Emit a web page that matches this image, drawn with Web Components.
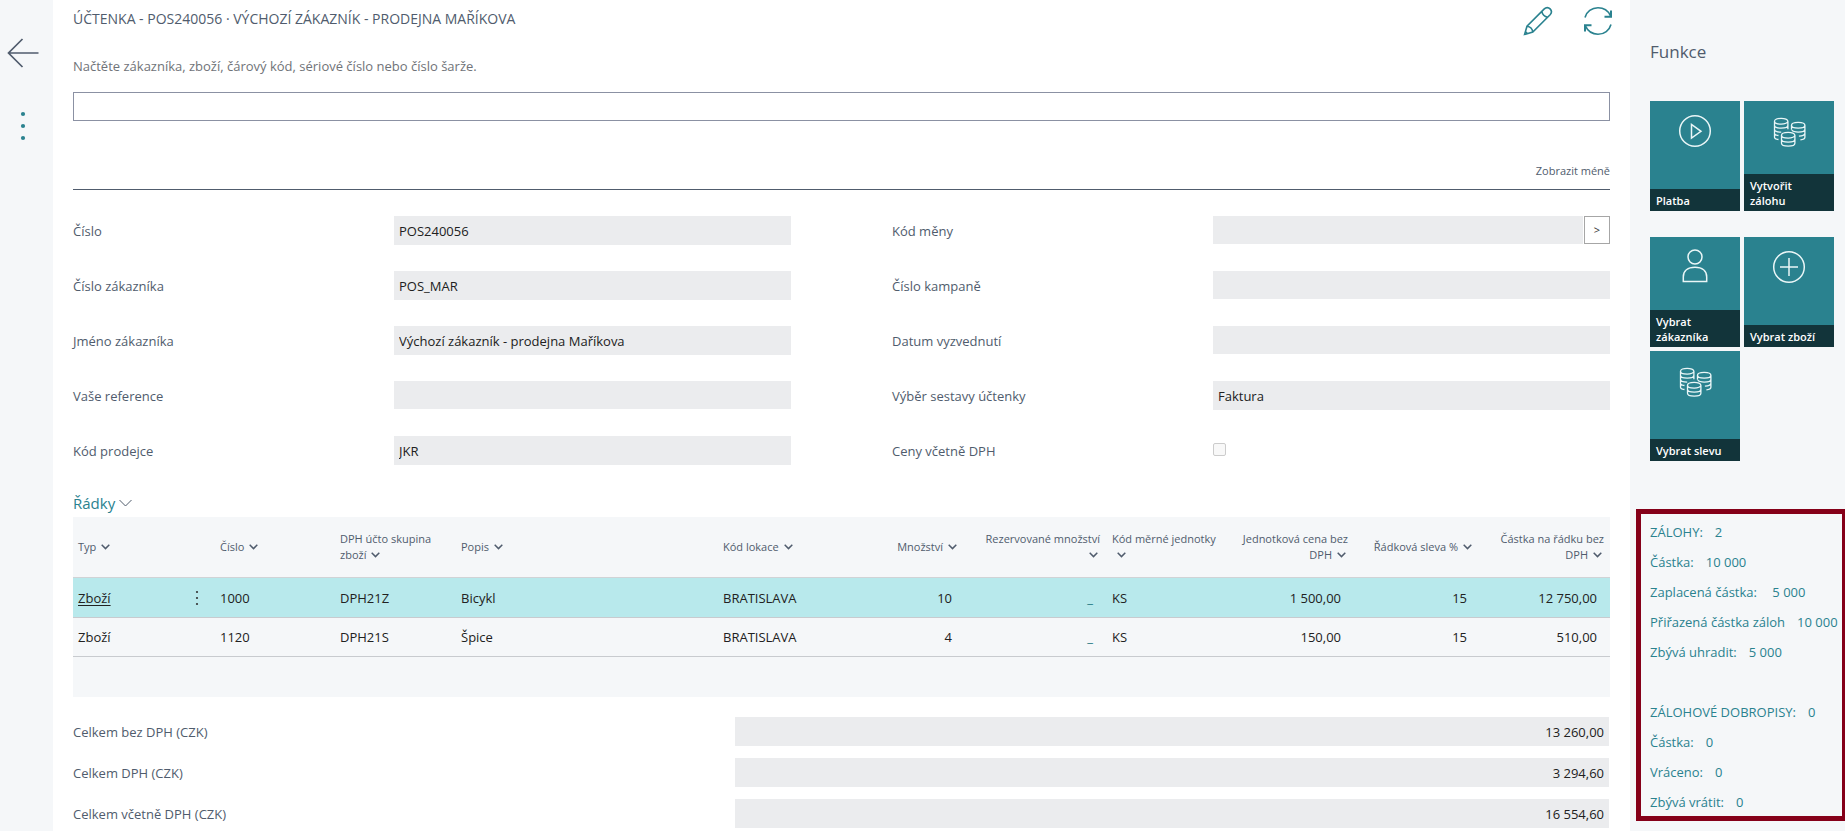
<!DOCTYPE html>
<html lang="cs">
<head>
<meta charset="utf-8">
<title>Účtenka - POS240056</title>
<style>
  body {
    margin: 0;
    background: #fff;
    font: 13px/20px "Open Sans", "Noto Sans", sans-serif;
    color: #212121;
    --slate: #505c6d;
    --teal: #2a828f;
    --panel: #f5f7f9;
    --field: #ebecee;
  }
</style>
</head>
<body>
<pos-app>
  <pos-rail slot="rail"></pos-rail>

  <pos-title slot="main">ÚČTENKA - POS240056 · VÝCHOZÍ ZÁKAZNÍK - PRODEJNA MAŘÍKOVA</pos-title>
  <pos-scan slot="main" label="Načtěte zákazníka, zboží, čárový kód, sériové číslo nebo číslo šarže."></pos-scan>
  <pos-form slot="main">
    <pos-field label="Číslo" value="POS240056"></pos-field>
    <pos-field label="Kód měny" lookup></pos-field>
    <pos-field label="Číslo zákazníka" value="POS_MAR"></pos-field>
    <pos-field label="Číslo kampaně"></pos-field>
    <pos-field label="Jméno zákazníka" value="Výchozí zákazník - prodejna Maříkova"></pos-field>
    <pos-field label="Datum vyzvednutí"></pos-field>
    <pos-field label="Vaše reference"></pos-field>
    <pos-field label="Výběr sestavy účtenky" value="Faktura"></pos-field>
    <pos-field label="Kód prodejce" value="JKR"></pos-field>
    <pos-field label="Ceny včetně DPH" type="checkbox"></pos-field>
  </pos-form>
  <pos-lines slot="main"></pos-lines>
  <pos-totals slot="main">
    <pos-total label="Celkem bez DPH (CZK)" value="13 260,00"></pos-total>
    <pos-total label="Celkem DPH (CZK)" value="3 294,60"></pos-total>
    <pos-total label="Celkem včetně DPH (CZK)" value="16 554,60"></pos-total>
  </pos-totals>

  <pos-functions slot="side">
    <pos-tile slot="pay" icon="play">Platba</pos-tile>
    <pos-tile slot="pay" icon="coins">Vytvořit zálohu</pos-tile>
    <pos-tile slot="pick" icon="user">Vybrat zákazníka</pos-tile>
    <pos-tile slot="pick" icon="plus">Vybrat zboží</pos-tile>
    <pos-tile slot="pick" icon="coins">Vybrat slevu</pos-tile>
  </pos-functions>
  <pos-balance slot="side"></pos-balance>
</pos-app>

<script>
const define = (name, html) => {
  const template = document.createElement('template');
  customElements.define(name, class extends HTMLElement {
    connectedCallback() {
      if (this.shadowRoot) return;
      template.innerHTML = '<style>:host,*{box-sizing:border-box}</style>' + (typeof html === 'function' ? html(this) : html);
      this.attachShadow({ mode: 'open' }).append(template.content.cloneNode(true));
    }
  });
};

define('pos-app', `
  <style>
    :host { display: grid; grid-template-columns: 53px minmax(0, 1fr) 215px; min-height: 100vh; }
    main { padding: 0 20px 2px; }
    aside { background: var(--panel); overflow: hidden; }
  </style>
  <slot name="rail"></slot>
  <main><slot name="main"></slot></main>
  <aside><slot name="side"></slot></aside>
`);

define('pos-rail', `
  <style>
    :host { display: flex; flex-direction: column; align-items: center; gap: 40px; padding: 38px 7px 0 0; background: var(--panel); }
    button { display: block; padding: 0; border: 0; background: none; cursor: pointer; }
    svg { display: block; }
  </style>
  <button aria-label="Zpět"><svg width="32" height="30" viewBox="0 0 32 30" fill="none" stroke="#505c6d" stroke-width="1.7"><path d="M31.5 15H1.5M15.5 1 1.5 15l14 14"/></svg></button>
  <button aria-label="Další akce"><svg width="32" height="36" viewBox="0 0 32 36" fill="#2a828f"><circle cx="16" cy="6" r="2.1"/><circle cx="16" cy="18" r="2.1"/><circle cx="16" cy="30" r="2.1"/></svg></button>
`);

define('pos-title', `
  <style>
    :host { display: flex; justify-content: space-between; align-items: flex-start; height: 56px; padding-top: 6px; margin-right: -3px; }
    h1 { margin: 3px 0 0; font-size: 14px; line-height: 20px; font-weight: 400; color: var(--slate); }
    div { display: flex; gap: 30px; }
    button { display: block; padding: 0; border: 0; background: none; cursor: pointer; }
    svg { display: block; fill: none; stroke: var(--teal); stroke-width: 1.6; }
  </style>
  <h1><slot></slot></h1>
  <div>
    <button aria-label="Upravit"><svg width="30" height="30" viewBox="0 0 30 30"><path d="M1.6 28.4 4 20.200 21.300 2.900c1.700-1.700 4.200-1.700 5.800 0s1.600 4.100 0 5.800L9.800 26zM18.800 5.400c.6 3 2.800 5.200 5.800 5.800M4 20.200c3 .4 5.400 2.800 5.800 5.800M2.400 25.600l2 2"/></svg></button>
    <button aria-label="Obnovit"><svg width="30" height="30" viewBox="0 0 30 30"><path d="M2 11.500C3.500 5.700 8.800 1.800 15 1.800c5.600 0 10.200 3 12.500 8M28 18.500C26.500 24.300 21.200 28.200 15 28.200c-5.600 0-10.200-3-12.500-8"/><path stroke-width="2" d="M28 4.500v6.200h-6.500M2 25.500v-6.200h6.500"/></svg></button>
  </div>
`);

define('pos-scan', el => `
  <style>
    :host { display: block; border-bottom: 1px solid var(--slate); height: 134px; }
    label { display: block; color: #707378; margin-bottom: 16px; }
    input { display: block; width: 100%; height: 29px; border: 1px solid #8b91a3; background: #fff; padding: 0 5px; font: inherit; outline: 0; }
    a { display: block; width: fit-content; margin: 40px 0 0 auto; font-size: 11px; line-height: 20px; color: var(--slate); text-decoration: none; }
  </style>
  <label for="scan">${el.getAttribute('label')}</label>
  <input id="scan" type="text">
  <a href="#">Zobrazit méně</a>
`);

define('pos-form', `
  <style>
    :host { display: grid; grid-template-columns: 1fr 1fr; column-gap: 101px; row-gap: 26px; padding-top: 26px; }
  </style>
  <slot></slot>
`);

define('pos-field', el => {
  const value = el.getAttribute('value') || '';
  const check = el.getAttribute('type') === 'checkbox';
  return `
  <style>
    :host { display: grid; grid-template-columns: 321fr 397fr; align-items: center; height: 29px; }
    label { color: var(--slate); }
    div { display: flex; gap: 1px; align-items: flex-start; height: 29px; }
    [type=text] { flex: 1; min-width: 0; height: ${value ? 29 : 28}px; border: 0; border-radius: 0; padding: 0 5px; background: var(--field); font: inherit; color: inherit; outline: 0; }
    [type=checkbox] { appearance: none; width: 13px; height: 13px; margin: 7px 0 0; border: 1px solid #ccc; border-radius: 2px; background: #f8f8f8; }
    button { width: 26px; height: 28px; padding: 0; border: 1px solid #a6a6a6; background: #fff; font: inherit; font-size: 11px; color: #333; }
  </style>
  <label for="f">${el.getAttribute('label')}</label>
  <div>${check ? '<input id="f" type="checkbox" disabled>' : `<input id="f" type="text" readonly value="${value}">`}${el.hasAttribute('lookup') ? '<button aria-label="Vyhledat">&gt;</button>' : ''}</div>`;
});

const chevron = '<svg class="chev" width="9" height="6" viewBox="0 0 9 6" fill="none" stroke="#505c6d" stroke-width="1.500" aria-hidden="true"><path d="M.7.8l3.800 3.800L8.300.8"/></svg>';
const columns = [
  ['Typ', 106], ['', 35], ['Číslo', 120], ['DPH účto skupina<br>zboží', 121], ['Popis', 262], ['Kód lokace', 126],
  ['Množství', 122, 1], ['Rezervované množství<br>', 141, 1], ['Kód měrné jednotky<br>', 118],
  ['Jednotková cena bez<br>DPH', 130, 1], ['Řádková sleva %', 126, 1], ['Částka na řádku bez<br>DPH', 130, 1]
];
const dots = '<button aria-label="Akce řádku"><svg width="4" height="16" viewBox="0 0 4 16" fill="#333"><circle cx="2" cy="2" r="1.100"/><circle cx="2" cy="8" r="1.100"/><circle cx="2" cy="14" r="1.100"/></svg></button>';
const blank = '<a href="#">_</a>';
const rows = [
  ['<a href="#">Zboží</a>', dots, '1000', 'DPH21Z', 'Bicykl', 'BRATISLAVA', '10', blank, 'KS', '1 500,00', '15', '12 750,00'],
  ['Zboží', '', '1120', 'DPH21S', 'Špice', 'BRATISLAVA', '4', blank, 'KS', '150,00', '15', '510,00']
];

define('pos-lines', `
  <style>
    :host { display: block; margin-top: 27px; }
    h2 { display: flex; align-items: center; gap: 4px; margin: 0 0 3px; font-size: 15px; line-height: 22px; font-weight: 400; color: var(--teal); }
    .wrap { background: var(--panel); padding-bottom: 40px; }
    table { width: 100%; table-layout: fixed; border-collapse: separate; border-spacing: 0; }
    th, td { padding: 0 0 0 6px; text-align: left; font-weight: 400; white-space: nowrap; }
    th:first-child, td:first-child { padding-left: 5px; }
    td:nth-child(2) { padding: 0; }
    th { height: 61px; font-size: 11px; line-height: 16px; color: var(--slate); border-bottom: 1px solid #d0d3d6; }
    td { height: 40px; border-bottom: 1px solid #c8cbcf; }
    tr:last-child td { height: 39px; }
    .n { text-align: right; }
    th.n { padding: 0 6px 0 0; }
    td.n { padding: 0 13px 0 0; }
    .chev { margin: 0 2px 0 5px; vertical-align: 1px; }
    .on td { background: #b8e9ec; }
    a { color: inherit; text-underline-offset: 2px; }
    .n a { color: #1b7580; text-decoration: none; }
    button { display: block; margin: 0 auto; padding: 0; border: 0; background: none; }
    button svg { display: block; }
  </style>
  <h2>Řádky <svg width="13" height="8" viewBox="0 0 13 8" fill="none" stroke="#505c6d" aria-hidden="true"><path d="M.5 1l6 6 6-6"/></svg></h2>
  <div class="wrap">
    <table>
      <colgroup>${columns.map(c => `<col style="width:${c[1]}px">`).join('')}</colgroup>
      <thead><tr>${columns.map(c => `<th class="${c[2] ? 'n' : ''}">${c[0]}${c[0] ? chevron : ''}</th>`).join('')}</tr></thead>
      <tbody>${rows.map((r, i) => `<tr class="${i ? '' : 'on'}">${r.map((v, j) => `<td class="${columns[j][2] ? 'n' : ''}">${v}</td>`).join('')}</tr>`).join('')}</tbody>
    </table>
  </div>
`);

define('pos-totals', `
  <style>:host { display: grid; row-gap: 12px; padding: 20px 1px 0 0; }</style>
  <slot></slot>
`);

define('pos-total', el => `
  <style>
    :host { display: grid; grid-template-columns: 662fr 874fr; align-items: center; }
    label { color: var(--slate); }
    input { width: 100%; height: 29px; border: 0; padding: 0 5px; background: var(--field); font: inherit; color: inherit; text-align: right; outline: 0; }
  </style>
  <label for="t">${el.getAttribute('label')}</label>
  <input id="t" type="text" readonly value="${el.getAttribute('value')}">
`);

define('pos-functions', `
  <style>
    :host { display: block; padding: 40px 11px 0 20px; }
    h2 { margin: 0 0 37px; font-size: 17px; line-height: 24px; font-weight: 400; color: var(--slate); }
    div { display: grid; grid-template-columns: 90px 90px; gap: 4px; }
    div + div { margin-top: 26px; }
  </style>
  <h2>Funkce</h2>
  <div><slot name="pay"></slot></div>
  <div><slot name="pick"></slot></div>
`);

const icons = {
  play: '<circle cx="17" cy="17" r="15.300"/><path d="M13.500 10.500v13.500l9.500-6.700z"/>',
  plus: '<circle cx="17" cy="17" r="15.300"/><path d="M17 8v18M8 17h18"/>',
  user: '<circle cx="17" cy="7" r="7"/><path d="M5.300 31.500v-4.500c0-6 4.500-9.700 11.700-9.700s11.700 3.700 11.700 9.700v4.500z"/>',
  coins: '<g stroke-width="1.300" transform="translate(1 1)"><path d="M1.500 6.200a6.700 2.900 0 1 0 13.400 0a6.700 2.900 0 1 0 -13.400 0v16c0 1.200 1.600 2 4 2.300M1.500 10.200c0 1.700 3 2.900 6.700 2.900s6.700-1.200 6.700-2.900M1.500 14.200c0 1.700 3 2.900 6.700 2.900M1.500 18.200c0 1.200 1.600 2 4 2.300M14.900 6.200v8"/><path d="M18.500 10.200a6.700 2.900 0 1 0 13.400 0a6.700 2.900 0 1 0 -13.400 0v4.500M31.900 10.200v12c0 1.300-1.800 2.300-4.500 2.700M31.900 14.200c0 1.700-3 2.900-6.700 2.900-3 0-5.500-.8-6.400-1.900M31.900 18.200c0 1.500-2.500 2.700-6 2.900"/><path d="M8.500 20.200a6.700 2.900 0 1 0 13.400 0a6.700 2.900 0 1 0 -13.400 0v8c0 1.700 3 2.900 6.700 2.900s6.700-1.200 6.700-2.900v-8M8.500 24.200c0 1.700 3 2.900 6.700 2.900s6.700-1.200 6.700-2.900"/></g>'
};

define('pos-tile', el => `
  <style>
    :host { display: block; }
    button { display: flex; flex-direction: column; justify-content: space-between; width: 100%; height: 110px; padding: 13px 0 0; border: 0; background: var(--teal); color: #fff; font: inherit; text-align: left; cursor: pointer; }
    svg { display: block; align-self: center; overflow: visible; fill: none; stroke: #eaf6f7; stroke-width: 1.500; }
    span { display: block; width: 100%; padding: 4px 8px 3px 6px; background: #12343a; font-size: 11px; line-height: 15px; font-weight: 600; }
  </style>
  <button><svg width="34" height="34" viewBox="0 0 34 34" aria-hidden="true">${icons[el.getAttribute('icon')]}</svg><span><slot></slot></span></button>
`);

define('pos-balance', `
  <style>
    :host { display: block; margin: 48px 0 0 6px; padding: 4px 0 0 9px; border: 5px solid #850019; border-right-width: 3px; color: var(--teal); }
    dl { display: grid; row-gap: 2px; margin: 0; }
    dl + dl { margin-top: 32px; }
    div { display: flex; gap: 12px; line-height: 28px; white-space: nowrap; }
    dd { margin: 0; }
  </style>
  <dl>
    <div><dt>ZÁLOHY:</dt><dd>2</dd></div>
    <div><dt>Částka:</dt><dd>10 000</dd></div>
    <div><dt>Zaplacená částka:</dt><dd>&nbsp;5 000</dd></div>
    <div><dt>Přiřazená částka záloh</dt><dd>10 000</dd></div>
    <div><dt>Zbývá uhradit:</dt><dd>5 000</dd></div>
  </dl>
  <dl>
    <div><dt>ZÁLOHOVÉ DOBROPISY:</dt><dd>0</dd></div>
    <div><dt>Částka:</dt><dd>0</dd></div>
    <div><dt>Vráceno:</dt><dd>0</dd></div>
    <div><dt>Zbývá vrátit:</dt><dd>0</dd></div>
  </dl>
`);
</script>
</body>
</html>
